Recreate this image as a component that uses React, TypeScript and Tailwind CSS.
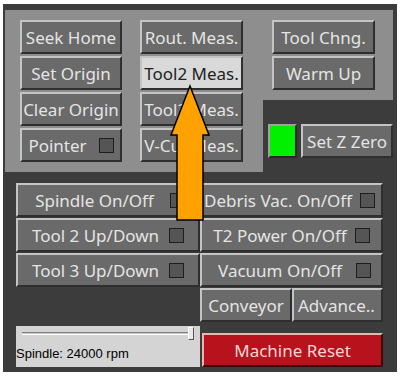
import React from 'react';

const font = { fontFamily: '"Noto Sans", "DejaVu Sans", sans-serif' };

const bevel =
  'border-t-2 border-l-2 border-b-2 border-r-2 border-t-[#c4c4c4] border-l-[#c4c4c4] border-b-[#2e2e2e] border-r-[#2e2e2e]';

const Check: React.FC = () => (
  <span className="inline-block w-[15px] h-[15px] bg-[#555555] border border-[#1e1e1e] shrink-0" />
);

interface BtnProps {
  label: string;
  w: string;
  check?: boolean;
  light?: boolean;
  className?: string;
}

const Btn: React.FC<BtnProps> = ({ label, w, check, light, className }) => (
  <div
    className={`${w} h-[34px] ${bevel} flex items-center justify-center gap-[8px] overflow-hidden whitespace-nowrap text-[17px] leading-none ${
      light ? 'bg-[#d9d9d9] text-[#222222]' : 'bg-[#6a6a6a] text-[#e4e4e4]'
    } ${className || ''}`}
  >
    <span>{label}</span>
    {check && <Check />}
  </div>
);

const App: React.FC = () => {
  return (
    <div className="w-[404px] h-[378px] bg-white pt-[4px] pl-[3px] relative" style={font}>
      <div className="w-[394px] h-[368px] bg-[#3c3c3c] pt-[6px] pl-[2px]">
        {/* top control panels */}
        <div className="flex">
          <div className="w-[258px] h-[162px] bg-[#8e8e8e] pt-[10px] pl-[15px] flex gap-[18px]">
            <div className="flex flex-col gap-[2px]">
              <Btn label="Seek Home" w="w-[102px]" />
              <Btn label="Set Origin" w="w-[102px]" />
              <Btn label="Clear Origin" w="w-[102px]" />
              <Btn label="Pointer" w="w-[102px]" check className="gap-[12px]" />
            </div>
            <div className="flex flex-col gap-[2px]">
              <Btn label="Rout. Meas." w="w-[103px]" />
              <Btn label="Tool2 Meas." w="w-[103px]" light />
              <Btn label="Tool3 Meas." w="w-[103px]" />
              <Btn label="V-Cut Meas." w="w-[103px]" />
            </div>
          </div>
          <div className="flex flex-col">
            <div className="w-[130px] h-[90px] bg-[#8e8e8e] pt-[10px] pl-[9px] flex flex-col gap-[2px]">
              <Btn label="Tool Chng." w="w-[103px]" />
              <Btn label="Warm Up" w="w-[103px]" />
            </div>
            <div className="flex gap-[4px] pt-[24px] pl-[5px]">
              <div className="w-[29px] h-[34px] bg-[#00f000] border-2 border-t-[#a0a0a0] border-l-[#a0a0a0] border-b-[#2a2a2a] border-r-[#2a2a2a]" />
              <Btn label="Set Z Zero" w="w-[92px]" />
            </div>
          </div>
        </div>

        {/* toggles */}
        <div className="pl-[11px] pt-[11px] flex flex-col gap-[1px]">
          <div className="flex">
            <Btn label="Spindle On/Off" w="w-[184px]" check className="gap-[16px] pl-[4px]" />
            <Btn label="Debris Vac. On/Off" w="w-[183px]" check className="gap-[0px] pr-[4px]" />
          </div>
          <div className="flex">
            <Btn label="Tool 2 Up/Down" w="w-[184px]" check className="gap-[10px]" />
            <Btn label="T2 Power On/Off" w="w-[183px]" check className="gap-[8px]" />
          </div>
          <div className="flex">
            <Btn label="Tool 3 Up/Down" w="w-[184px]" check className="gap-[10px]" />
            <Btn label="Vacuum On/Off" w="w-[183px]" check className="gap-[14px] pl-[6px]" />
          </div>
          <div className="flex">
            <div className="w-[184px]" />
            <Btn label="Conveyor" w="w-[92px]" />
            <Btn label="Advance.." w="w-[91px]" className="justify-start pl-[4px]" />
          </div>
        </div>

        {/* spindle speed + reset */}
        <div className="pl-[11px] pt-[4px] flex items-end">
          <div className="w-[184px] h-[41px] bg-[#d4d4d4] relative">
            <div className="absolute left-[6px] top-[6px] w-[170px] h-[3px] border-t border-t-[#808080] border-b border-b-[#ffffff] bg-[#c8c8c8]" />
            <div className="absolute left-[172px] top-[1px] w-[6px] h-[13px] bg-[#e8e8e8] border border-t-white border-l-white border-b-[#555555] border-r-[#555555]" />
            <div
              className="absolute left-[0px] top-[21px] text-[13px] text-black leading-none"
              style={{ fontFamily: '"Liberation Sans", Arial, sans-serif' }}
            >
              Spindle: 24000 rpm
            </div>
          </div>
          <div className="ml-[2px] w-[181px] h-[34px] bg-[#b8121c] border-t-2 border-l-2 border-t-[#e9b4b4] border-l-[#e9b4b4] border-b-2 border-r-2 border-b-[#3a0a0a] border-r-[#3a0a0a] flex items-center justify-center text-[17px] text-[#f2d6d6] leading-none">
            Machine Reset
          </div>
        </div>
      </div>

      {/* orange pointer arrow */}
      <svg className="absolute left-0 top-0" width="404" height="378" viewBox="0 0 404 378">
        <polygon
          points="190,86 171,135 177,135 177,220 203,220 203,135 209,135"
          fill="#ffa200"
          stroke="#000000"
          strokeWidth="1.5"
          strokeLinejoin="miter"
        />
      </svg>
    </div>
  );
};

export default App;
